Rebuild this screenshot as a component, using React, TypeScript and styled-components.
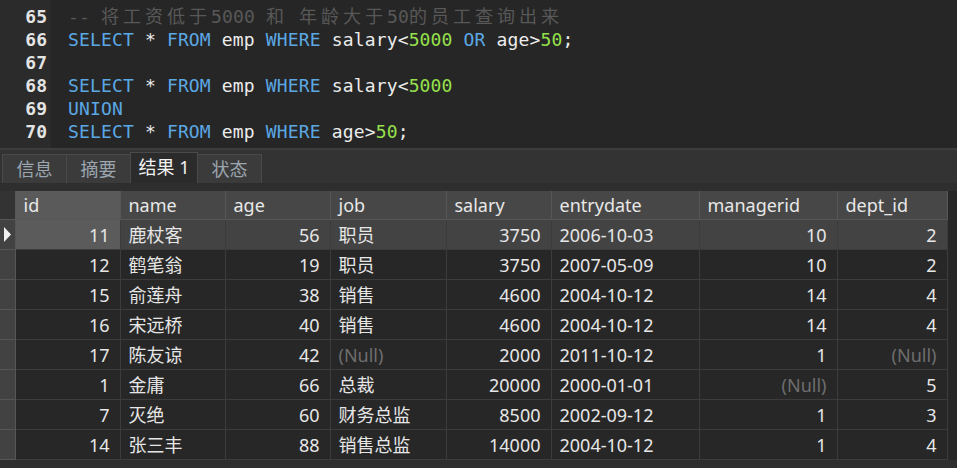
import React from 'react'
import styled, { createGlobalStyle } from 'styled-components'

const GlobalStyle = createGlobalStyle`
  html, body {
    margin: 0;
    padding: 0;
    background: #2e2e2e;
    overflow: hidden;
  }
`

const Page = styled.div`
  width: 957px;
  height: 468px;
  display: flex;
  flex-direction: column;
  background: #2e2e2e;
  font-family: 'Noto Sans', 'Noto Sans CJK SC', sans-serif;
`

const Editor = styled.div`
  display: flex;
  height: 148px;
  background: #262626;
`

const Gutter = styled.div`
  width: 51px;
  background: #2b2b2b;
  padding: 5px 4px 0 0;
  box-sizing: border-box;
  text-align: right;
`

const CodeArea = styled.div`
  flex: 1;
  padding: 5px 0 0 17px;
`

const monoText = `
  font-family: 'DejaVu Sans Mono', 'Noto Sans CJK SC', monospace;
  font-size: 18px;
  line-height: 23px;
  height: 23px;
  letter-spacing: 0.15px;
  white-space: pre;
`

const LineNo = styled.div`
  ${monoText}
  color: #e4e4e4;
  font-weight: bold;
  letter-spacing: 0;
`

const CodeLine = styled.div`
  ${monoText}
  color: #ececec;
`

const Tok = styled.span<{ $kind: string }>`
  color: ${(p) =>
    p.$kind === 'kw'
      ? '#5ba8e4'
      : p.$kind === 'num'
        ? '#96e04c'
        : p.$kind === 'cm'
          ? '#585858'
          : '#ececec'};
`

const Wide = styled.span`
  letter-spacing: 4px;
`

const Splitter = styled.div`
  height: 2px;
  background: #3d3d3d;
`

const TabBar = styled.div`
  height: 33px;
  display: flex;
  align-items: flex-end;
  padding-left: 2px;
  background: #333333;
`

const Tab = styled.div<{ $active?: boolean }>`
  box-sizing: border-box;
  width: ${(p) => (p.$active ? 68 : 65)}px;
  height: ${(p) => (p.$active ? 31 : 29)}px;
  border: 1px solid #4a4a4a;
  border-bottom: none;
  margin-left: -1px;
  background: ${(p) => (p.$active ? '#2b2b2b' : '#3b3b3b')};
  color: ${(p) => (p.$active ? '#f2f2f2' : '#9ba6b0')};
  font-size: 18px;
  line-height: 28px;
  text-align: center;
  &:first-child {
    margin-left: 0;
  }
`

const Band = styled.div`
  height: 8px;
  background: #2e2e2e;
`

const TableWrap = styled.div`
  display: flex;
  height: 269px;
`

const Grid = styled.table`
  width: 947px;
  border-collapse: collapse;
  table-layout: fixed;
  font-size: 18px;
  line-height: 24px;
  color: #e6e6e6;
`

const Scroll = styled.div`
  width: 10px;
  background: #272727;
`

const Th = styled.th<{ $hl?: boolean }>`
  height: 28px;
  padding: 0 0 0 8px;
  text-align: left;
  font-weight: normal;
  background: ${(p) => (p.$hl ? '#5a5a5a' : '#474747')};
  border: 1px solid #575757;
  border-top: none;
  color: #e8e8e8;
  white-space: nowrap;
  overflow: hidden;
`

const Corner = styled.th`
  background: #333333;
  padding: 0;
  border: none;
`

const Indicator = styled.td`
  height: 29px;
  padding: 0;
  background: #424242;
  border: 1px solid #565656;
  border-left: none;
  vertical-align: middle;
  line-height: 0;
`

const Td = styled.td<{ $num?: boolean; $sel?: boolean; $hl?: boolean; $nil?: boolean }>`
  height: 29px;
  padding: ${(p) => (p.$num ? '0 10px 0 0' : '0 0 0 8px')};
  text-align: ${(p) => (p.$num ? 'right' : 'left')};
  background: ${(p) => (p.$hl ? '#5b5b5b' : p.$sel ? '#434343' : '#272727')};
  border: 1px solid #3c3c3c;
  color: ${(p) => (p.$nil ? '#6e6e6e' : '#e6e6e6')};
  white-space: nowrap;
  overflow: hidden;
`

const ArrowSvg = styled.svg`
  display: block;
`

type Token = [string, string]

const codeLines: { no: number; toks: Token[] }[] = [
  {
    no: 65,
    toks: [
      ['cm', '-- '],
      ['cmw', '将工资低于'],
      ['cm', '5000 '],
      ['cmw', '和'],
      ['cm', ' '],
      ['cmw', '年龄大于'],
      ['cm', '50'],
      ['cmw', '的员工查询出来']
    ]
  },
  {
    no: 66,
    toks: [
      ['kw', 'SELECT'],
      ['id', ' * '],
      ['kw', 'FROM'],
      ['id', ' emp '],
      ['kw', 'WHERE'],
      ['id', ' salary<'],
      ['num', '5000'],
      ['id', ' '],
      ['kw', 'OR'],
      ['id', ' age>'],
      ['num', '50'],
      ['id', ';']
    ]
  },
  { no: 67, toks: [] },
  {
    no: 68,
    toks: [
      ['kw', 'SELECT'],
      ['id', ' * '],
      ['kw', 'FROM'],
      ['id', ' emp '],
      ['kw', 'WHERE'],
      ['id', ' salary<'],
      ['num', '5000']
    ]
  },
  { no: 69, toks: [['kw', 'UNION']] },
  {
    no: 70,
    toks: [
      ['kw', 'SELECT'],
      ['id', ' * '],
      ['kw', 'FROM'],
      ['id', ' emp '],
      ['kw', 'WHERE'],
      ['id', ' age>'],
      ['num', '50'],
      ['id', ';']
    ]
  }
]

const columns = [
  { name: 'id', width: 105, num: true },
  { name: 'name', width: 105, num: false },
  { name: 'age', width: 105, num: true },
  { name: 'job', width: 116, num: false },
  { name: 'salary', width: 105, num: true },
  { name: 'entrydate', width: 148, num: false },
  { name: 'managerid', width: 138, num: true },
  { name: 'dept_id', width: 110, num: true }
]

const rows: (string | null)[][] = [
  ['11', '鹿杖客', '56', '职员', '3750', '2006-10-03', '10', '2'],
  ['12', '鹤笔翁', '19', '职员', '3750', '2007-05-09', '10', '2'],
  ['15', '俞莲舟', '38', '销售', '4600', '2004-10-12', '14', '4'],
  ['16', '宋远桥', '40', '销售', '4600', '2004-10-12', '14', '4'],
  ['17', '陈友谅', '42', null, '2000', '2011-10-12', '1', null],
  ['1', '金庸', '66', '总裁', '20000', '2000-01-01', null, '5'],
  ['7', '灭绝', '60', '财务总监', '8500', '2002-09-12', '1', '3'],
  ['14', '张三丰', '88', '销售总监', '14000', '2004-10-12', '1', '4']
]

const tabs = ['信息', '摘要', '结果 1', '状态']

const Arrow = () => (
  <ArrowSvg width="15" height="29" viewBox="0 0 15 29">
    <path d="M4 7 L11 14.5 L4 22 Z" fill="#f2f2f2" />
  </ArrowSvg>
)

const App = () => {
  return (
    <Page>
      <GlobalStyle />
      <Editor>
        <Gutter>
          {codeLines.map((l) => (
            <LineNo key={l.no}>{l.no}</LineNo>
          ))}
        </Gutter>
        <CodeArea>
          {codeLines.map((l) => (
            <CodeLine key={l.no}>
              {l.toks.map(([kind, text], i) =>
                kind === 'cmw' ? (
                  <Tok key={i} $kind="cm">
                    <Wide>{text}</Wide>
                  </Tok>
                ) : (
                  <Tok key={i} $kind={kind}>
                    {text}
                  </Tok>
                )
              )}
            </CodeLine>
          ))}
        </CodeArea>
      </Editor>
      <Splitter />
      <TabBar>
        {tabs.map((t) => (
          <Tab key={t} $active={t === '结果 1'}>
            {t}
          </Tab>
        ))}
      </TabBar>
      <Band />
      <TableWrap>
        <Grid>
          <colgroup>
            <col style={{ width: 15 }} />
            {columns.map((c) => (
              <col key={c.name} style={{ width: c.width }} />
            ))}
          </colgroup>
          <thead>
            <tr>
              <Corner />
              {columns.map((c, i) => (
                <Th key={c.name} $hl={i === 0}>
                  {c.name}
                </Th>
              ))}
            </tr>
          </thead>
          <tbody>
            {rows.map((r, ri) => (
              <tr key={ri}>
                <Indicator>{ri === 0 ? <Arrow /> : null}</Indicator>
                {r.map((v, ci) => (
                  <Td
                    key={ci}
                    $num={columns[ci].num}
                    $sel={ri === 0}
                    $hl={ri === 0 && ci === 0}
                    $nil={v === null}
                  >
                    {v ?? '(Null)'}
                  </Td>
                ))}
              </tr>
            ))}
          </tbody>
        </Grid>
        <Scroll />
      </TableWrap>
    </Page>
  )
}

export default App
